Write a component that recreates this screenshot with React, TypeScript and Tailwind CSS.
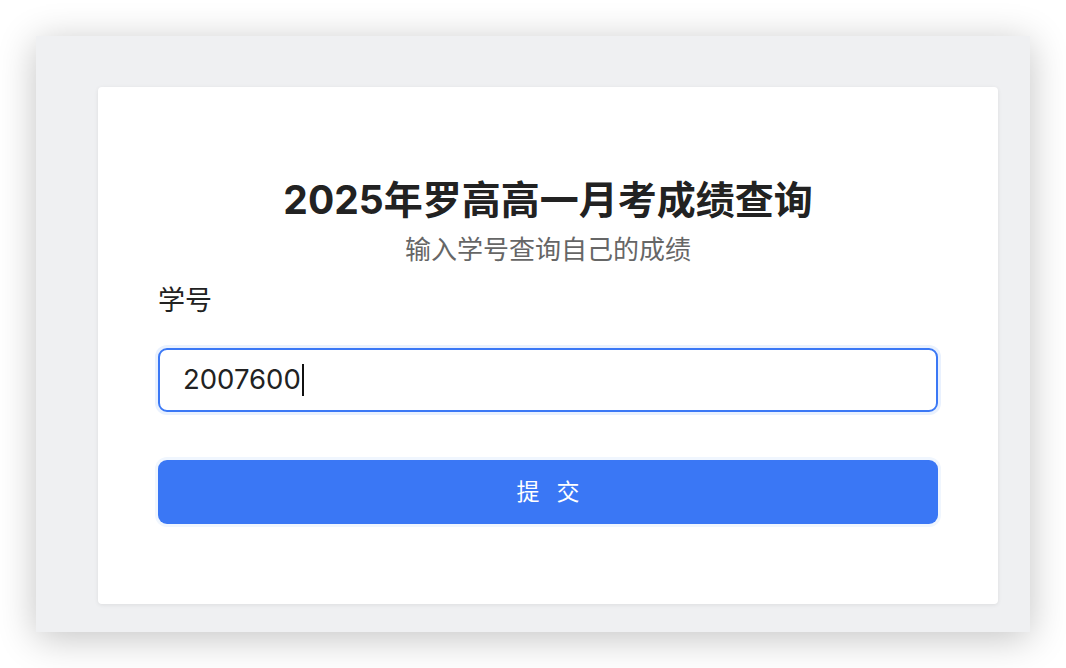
export default function App() {
  return (
    <div className="h-[668px] w-full bg-white pl-[36px] pt-[36px] font-['Inter','Noto_Sans_CJK_SC',sans-serif]">
      <div className="h-[596px] w-[994px] bg-[#eff0f2] pl-[62px] pt-[51px] shadow-[0_6px_36px_rgba(0,0,0,0.24)]">
        {/* Query card */}
        <div className="flex h-[517px] w-[900px] flex-col rounded-[4px] bg-white px-[60px] pt-[89px] shadow-[0_1px_4px_rgba(0,0,0,0.08)]">
          <h1 className="text-center text-[39px] font-bold leading-[48px] text-[#222]">
            2025年罗高高一月考成绩查询
          </h1>
          <p className="mt-[9px] text-center text-[26px] leading-[33px] text-[#666]">
            输入学号查询自己的成绩
          </p>
          <label className="mt-[18px] text-[27px] leading-[33px] text-[#222]">学号</label>
          <div className="mt-[31px] flex h-[64px] items-center rounded-[9px] border-2 border-[#3b78f5] pl-[23px] text-[27.5px] text-[#222] shadow-[0_0_0_3px_#e9f1fe]">
            <span>2007600</span>
            <span className="ml-[1px] h-[32px] w-[2px] bg-[#111]" />
          </div>
          <button className="mt-[48px] flex h-[64px] items-center justify-center rounded-[9px] bg-[#3a77f5] pl-[17px] text-[23px] tracking-[17px] text-white shadow-[0_0_0_3px_#f0f6fe]">
            提交
          </button>
        </div>
      </div>
    </div>
  );
}
